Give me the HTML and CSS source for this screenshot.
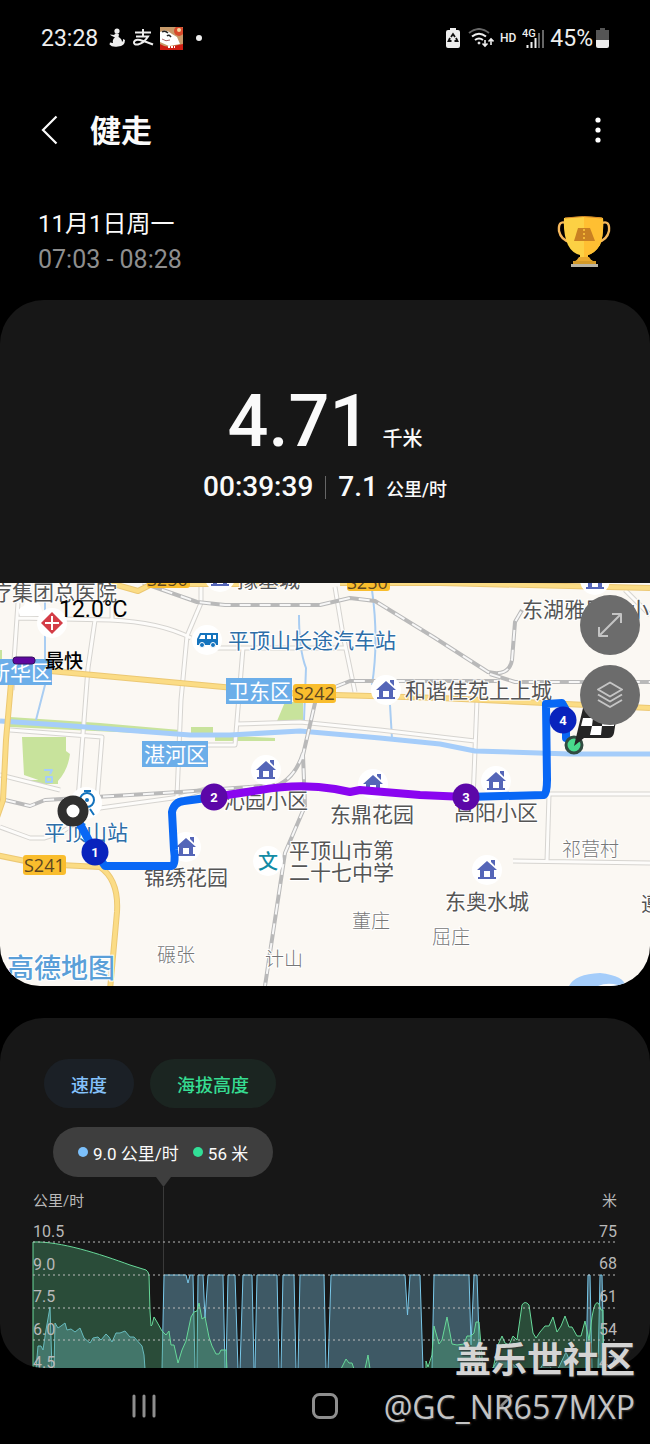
FILE: index.html
```html
<!DOCTYPE html>
<html lang="zh-CN">
<head>
<meta charset="utf-8">
<meta name="viewport" content="width=device-width, initial-scale=1">
<title>健走</title>
<link rel="stylesheet" href="styles.css">
</head>
<body>
<div class="screen">
  <div class="status">
    <div class="status-left">
      <span>23:28</span>
      <svg width="18" height="20" viewBox="0 0 18 20" fill="#eee"><circle cx="9" cy="3" r="2.6"/><path d="M6.500 6Q9 4.500 11 6.500L10.500 9Q14 11 14 14Q15.500 13 15 11L17 12Q17 18 10 18.500Q4 19.500 1.500 16.500L2 14.500L5 15Q4 11.500 7 9.500L3 7.500L2 6.500L6.500 7Z"/></svg>
      <svg width="22" height="20" viewBox="0 0 22 20" fill="none" stroke="#eee" stroke-width="2"><path d="M3 4.500H19M11 1V8.500M4 8.500H16Q12 15 6 16.500Q1.500 17 2 14Q3 11 8 12Q15 14 21 16.500"/></svg>
      <svg width="23" height="23" viewBox="0 0 23 23"><rect width="23" height="23" fill="#c79a6a"/><path d="M0 5Q6 1 12 7L17 10L20 17L9 19L0 15Z" fill="#fff"/><path d="M2 5Q5 3 8 6M7 9Q9 7 11 10" fill="none" stroke="#222" stroke-width="1.500"/><path d="M2 12Q6 15 10 13" fill="none" stroke="#a66"/><circle cx="19" cy="4" r="5" fill="#d84a2b"/><circle cx="19" cy="3" r="2" fill="#f6d7a0"/><path d="M0 17Q6 21 13 19L23 17V23H0Z" fill="#cf1d12"/><path d="M8 20H15" stroke="#fff" stroke-width="2" stroke-dasharray="2 1"/></svg>
      <i class="dot"></i>
    </div>
    <div class="status-right">
      <svg width="14" height="20" viewBox="0 0 14 20"><path d="M4 0H10V2H12Q14 2 14 4V18Q14 20 12 20H2Q0 20 0 18V4Q0 2 2 2H4Z" fill="#eee"/><path d="M5 9L7 6L9 9M10 10L11.500 13H8.500M5.500 13H2.500L4 10" fill="none" stroke="#111" stroke-width="1.800"/></svg>
      <svg class="wifi" width="26" height="20" viewBox="0 0 26 20" fill="none" stroke="#eee" stroke-width="2"><path d="M1 5Q11-3 21 5" stroke="#666"/><path d="M4 8.500Q11 3 18 8.500M7 12Q11 9 15 12"/><circle cx="11" cy="15" r="1" fill="#eee" stroke-width="1"/><path d="M17 12V18M14.500 15.500L17 18L19.500 15.500M23 17V11M20.500 13.500L23 11L25.500 13.500" stroke-width="1.600"/></svg>
      <span class="hd">HD</span>
      <svg width="22" height="20" viewBox="0 0 22 20"><text x="0" y="9" class="g4">4G</text><path d="M5.500 17V20M9.500 14V20M13.500 10V20" stroke="#eee" stroke-width="2"/><path d="M17 5V20M21 2V20" stroke="#666" stroke-width="2"/></svg>
      <span>45%</span>
      <svg class="battery" width="13" height="20" viewBox="0 0 13 20"><path d="M4 0H9V2H13V12H0V2H4Z" fill="#555"/><path d="M0 12H13V18Q13 20 11 20H2Q0 20 0 18Z" fill="#eee"/></svg>
    </div>
  </div>

  <header class="appbar">
    <button class="icon-btn" aria-label="返回"><svg width="17" height="30" viewBox="0 0 17 30" fill="none" stroke="#fafafa" stroke-width="2.200"><path d="M15.500 1.500L2 15L15.500 28.500"/></svg></button>
    <h1>健走</h1>
    <button class="icon-btn" aria-label="更多"><svg width="6" height="26" viewBox="0 0 6 26" fill="#fff"><circle cx="3" cy="3" r="2.600"/><circle cx="3" cy="13" r="2.600"/><circle cx="3" cy="23" r="2.600"/></svg></button>
  </header>

  <section class="when">
    <div>
      <p class="date">11月1日周一</p>
      <p class="time">07:03 - 08:28</p>
    </div>
    <svg width="54" height="54" viewBox="0 0 54 54"><g fill="none" stroke="#f6b85c" stroke-width="2.400"><path d="M9 8Q1 5 2 16Q4 25 13 27"/><path d="M45 8Q53 5 52 16Q50 25 41 27"/></g><path d="M7 3Q27 0 46 3Q47 20 43 30Q38 38 31 40V43Q32 45 36 46V50H18V46Q22 45 23 43V40Q15 38 11 30Q6 19 7 3Z" fill="#fcd144"/><path d="M27 2Q38 1 46 3Q47 20 43 30Q38 38 31 40V43Q32 45 36 46V50H27Z" fill="#ffbf32"/><path d="M8 3Q27 0 45 3" fill="none" stroke="#d98b28"/><path d="M21 13H33L38 26H17Z" fill="#c98022"/><path d="M27 14V25" stroke="#ffc93c" stroke-width="1.500" stroke-dasharray="2 2"/><path d="M22 42H32L35 46H19Z" fill="#e9a92e"/><path d="M16 46H39V50H16Z" fill="#d49a28"/><path d="M14 49H41V52H14Z" fill="#b9b4a4"/></svg>
  </section>

  <main>
    <section class="summary">
      <p class="distance"><span>4.71</span><small>千米</small></p>
      <p class="pace"><span>00:39:39</span><i class="rule"></i><span>7.1</span><small>公里/时</small></p>
    </section>

    <section class="map">
      <svg class="map-canvas" viewBox="0 583 650 403" role="img" aria-label="健走路线地图">
        <defs>
          <g id="house"><circle r="15" fill="#fff"/><path d="M0-9L10 0H7V7H9V9H-9V7H-7V0H-10ZM4-10H8V-4L4-8Z" fill="#5566b8"/><path d="M-3 1H3V7H-3Z" fill="#fff"/></g>
          <path id="lanes" d="M18 603L12 690M18 618L110 620Q160 622 191 638M95 620L88 668L78 800M201 583V603L187 636L181 700L177 796M10 730L102 737L97 800M112 600V620M335 587L343 635L355 692M243 648L235 745H205M215 648H345M237 724L300 722L380 730L475 741M477 700L473 800M549 795L547 861M550 794H650M513 861L650 863M0 827L30 838H44L60 833L100 808L180 797L215 786M0 775L60 790M625 590L650 615"/>
          <path id="rails" d="M143 583L197 602L225 605H320L350 598L375 601L435 638L488 672Q509 677 512 660L515 622L522 610M490 674L515 682H650M335 687L350 681H500M318 690L303 755L305 806L285 853L265 986M303 753Q294 782 270 788M5 800L30 806L45 800L180 792L275 785"/>
          <path id="highways" d="M13 660L6 740L3 800L-4 820M50 671L180 683L300 694L440 698L650 708M110 583L138 591L152 584H300M340 583L440 583L650 588M-4 855L40 864L100 867Q119 880 117 912L110 990"/>
        </defs>
        <rect x="0" y="583" width="650" height="403" fill="#fbf8f3"/>
        <g fill="#c8e39c"><path d="M22 737H66V751L70 754Q68 770 58 781L50 784L24 775Z"/><path d="M285 702H303V721H277Z"/><path d="M191 727H213V734H191Z"/><path d="M0 650H2V680H0ZM10 717L100 723L180 730V735L10 727Z"/><path d="M215 735L275 738V741H215Z"/><path d="M30 780H58V784H30Z"/></g>
        <path class="stream" d="M45 600V685L36 720M299 615Q299 650 306 668L304 720M372 590Q379 640 372 685M390 705L392 739"/>
        <use href="#lanes" class="road-edge"/><use href="#lanes" class="road-core"/>
        <path class="river" d="M0 721L60 725L150 732L190 735L230 735L300 731L380 738L440 744L475 751L570 754H650"/>
        <path d="M569 986Q575 974 600 973Q625 976 625 986Z" fill="#a5cdfa"/><path d="M598 986Q607 982 618 985V986Z" fill="#fff"/>
        <path d="M44 770H52L50 774M46 777H52V782H46Z" fill="none" stroke="#a5cdfa" stroke-width="2"/>
        <use href="#rails" class="rail-edge"/><use href="#rails" class="rail-core"/>
        <use href="#highways" class="main-edge"/><use href="#highways" class="main-core"/>
        <g fill="#6caee9"><rect x="-6" y="659" width="58" height="26"/><rect x="226" y="678" width="66" height="26"/><rect x="142" y="741" width="66" height="26"/></g>
        <g class="district"><text x="-11" y="680">新华区</text><text x="228" y="699">卫东区</text><text x="144" y="762">湛河区</text></g>
        <g fill="#f9bd2d"><rect x="147" y="574" width="43" height="14" rx="3"/><rect x="347" y="574" width="43" height="17" rx="3"/><rect x="293" y="684" width="43" height="19" rx="3"/><rect x="23" y="855" width="43" height="20" rx="3"/></g>
        <g class="route-no"><text x="147" y="586">S250</text><text x="347" y="589">S250</text><text x="294" y="700">S242</text><text x="24" y="872">S241</text></g>

        <use href="#house" x="220" y="577"/><use href="#house" x="595" y="580"/><use href="#house" x="386" y="690"/><use href="#house" x="266" y="770"/><use href="#house" x="373" y="784"/><use href="#house" x="496" y="781"/><use href="#house" x="186" y="847"/><use href="#house" x="487" y="870"/>
        <circle cx="207" cy="640" r="15" fill="#fff"/><path d="M200 633H218V645H197V639Z" fill="#1473bd"/><path d="M201 635H205V639H199ZM207 635H211V639H207ZM213 635H216V639H213Z" fill="#fff"/><circle cx="202" cy="645" r="2.500" fill="#1473bd" stroke="#fff"/><circle cx="213" cy="645" r="2.500" fill="#1473bd" stroke="#fff"/>
        <circle cx="52" cy="623" r="15" fill="#fff"/><path d="M52 612L63 623L52 634L41 623Z" fill="#d43d47"/><path d="M45 623H59M52 616V630" stroke="#fff" stroke-width="2"/>
        <circle cx="268" cy="861" r="15" fill="#fff"/><text x="258" y="869" class="school">文</text>
        <circle cx="86" cy="803" r="16" fill="#fff"/><circle cx="87" cy="800" r="7" fill="none" stroke="#1473bd" stroke-width="2"/><circle cx="87" cy="800" r="2" fill="#1473bd"/><path d="M84 791H91M80 815L84 809M94 815L90 809" stroke="#1473bd" stroke-width="2"/>
        <path d="M20 616Q16 608 24 606Q26 597 34 601Q43 604 42 616Z" fill="#fff"/>

        <g class="place"><text x="-9" y="600">疗集团总医院</text><text x="237" y="587">豫基城</text><text x="405" y="698">和谐佳苑上上城</text><text x="522" y="617">东湖雅居</text><text x="628" y="617">小</text><text x="224" y="808">沁园小区</text><text x="330" y="822">东鼎花园</text><text x="454" y="820">高阳小区</text><text x="144" y="885">锦绣花园</text><text x="289" y="858">平顶山市第</text><text x="289" y="880">二十七中学</text><text x="445" y="909">东奥水城</text><text x="641" y="911">遵</text></g>
        <g class="transit"><text x="228" y="648">平顶山长途汽车站</text><text x="44" y="840">平顶山站</text></g>
        <g class="village"><text x="562" y="856">祁营村</text><text x="432" y="944">屈庄</text><text x="352" y="928">董庄</text><text x="157" y="962">碾张</text><text x="265" y="966">计山</text></g>
        <text x="7" y="978" class="provider">高德地图</text>

        <g class="trail"><path d="M73 811L95 852L105 866H172Q176 864 174 850L172 812Q174 802 184 801L214 797"/><path d="M466 797L544 795Q547 793 547 780L546 704L562 703L566 710V738"/><path d="M214 797L260 790Q300 783 335 789L350 792L360 790L420 795L466 797" stroke="#8a05f0"/></g>
        <circle cx="73" cy="811" r="11" fill="#fff" stroke="#303030" stroke-width="9"/>
        <circle cx="574" cy="745" r="8" fill="#48d98c" stroke="#314b41" stroke-width="3"/>
        <path d="M574 746L583 708H618L614 733Q613 738 608 738H584Z" fill="#252525"/><path d="M583 718H593L592 726H581ZM603 718H615L614 726H602ZM592 726H602L601 735H590ZM594 709H604L603 718H593Z" fill="#fff"/>
        <g fill="#0923bd"><circle cx="95" cy="852" r="13.500"/><circle cx="563" cy="720" r="13.500"/></g><g fill="#5c07a8"><circle cx="214" cy="797" r="13.500"/><circle cx="466" cy="797" r="13.500"/></g>
        <g class="km"><text x="95" y="857">1</text><text x="214" y="802">2</text><text x="466" y="802">3</text><text x="563" y="725">4</text></g>
        <text x="59" y="617" class="temp">12.0°C</text>
        <rect x="13" y="657" width="22" height="7" rx="3" fill="#5f079e" stroke="#35115e"/><text x="45" y="668" class="fastest">最快</text>
      </svg>
      <div class="map-tools">
        <button class="round" aria-label="展开地图"><svg width="26" height="26" viewBox="0 0 26 26" fill="none" stroke="#c4c4c4" stroke-width="2"><path d="M2 24L24 2M15 2H24V11M2 15V24H11"/></svg></button>
        <button class="round" aria-label="图层"><svg width="26" height="28" viewBox="0 0 26 28" fill="none" stroke="#c4c4c4" stroke-width="2"><path d="M13 1.500L25 8.500L13 15.500L1 8.500ZM1 13.500L13 20.500L25 13.500M1 19L13 26L25 19"/></svg></button>
      </div>
    </section>

    <section class="chart-card">
      <div class="chips"><button class="chip speed">速度</button><button class="chip altitude">海拔高度</button></div>
      <div class="bubble"><i class="key blue"></i><span>9.0 公里/时</span><i class="key green"></i><span>56 米</span></div>
      <svg class="chart" viewBox="0 1177 650 191" role="img" aria-label="速度与海拔高度">
        <path d="M156 1177H171L163.500 1187Z" fill="#3e3e3e"/><path d="M163.500 1187V1274" stroke="#3a3a3a"/>
        <path class="spd" d="M36 1369L38 1346H41L43 1350L46 1330L50 1307L52 1369M54 1369L55 1323L58 1328L61 1326L65 1323L67 1330L71 1329L75 1332L80 1328L84 1338L90 1343L93 1338L98 1337L101 1340L106 1334L109 1337L112 1342L116 1333H120L125 1331L130 1337H134L142 1346L144 1355L145 1369M162 1369L164 1275H186L188 1283L190 1275H193L195 1369M197 1369L198 1275H203L205 1318L208 1275H223L225 1369M226 1369L228 1275H235L238 1369M240 1369L243 1275H252L254 1369M255 1369L257 1275H277L279 1369M281 1369L283 1275H294L296 1369M298 1369L300 1275H324L326 1369M328 1369L331 1275H405L407.500 1315L410 1275H420L423 1369M432 1369L434 1275H469L471 1345L474 1275H477L480 1369M492 1369L500 1357L510 1362L518 1369M540 1369L545 1361L552 1369M558 1369L566 1352L573 1369M586 1369L588 1275H590L592 1369M598 1369L600 1275H602L604 1369"/>
        <path class="alt" d="M33 1369V1242C60 1241 100 1254 130 1265L146 1270Q148 1271 149 1275L150 1311L151 1326L152 1325L154 1317L157 1322L162 1331L166 1335L169 1331L171 1345H174L178 1363L182 1350L186 1341L191 1317L194 1312L197 1311L199 1303L202 1319L205 1317L209 1337L212 1346L216 1354H219L221 1350H226L227 1369M341 1369L346 1359L349 1363H352L354 1369M365 1369L368 1355L370 1369M426 1369V1361L428 1367L432 1355L434 1326L439 1344L442 1340L447 1317L452 1344L457 1345L464 1344L467 1336H471L474 1333L476 1322H479L481 1345L483 1369M493 1369L498 1345L502 1336L505 1343L509 1345L513 1336L517 1340L522 1305Q525 1300 529 1305L533 1333L536 1338L540 1332L545 1326H549L553 1317L557 1332L561 1326L565 1316L569 1327H572L577 1336H581L585 1321L589 1340L592 1317Q595 1298 599 1304L601 1310H603V1369"/>
        <path class="grid" d="M33 1242H617M33 1275H617M33 1308H617M33 1340H617"/>
        <g class="axis"><text x="33" y="1206">公里/时</text><text x="33" y="1237">10.5</text><text x="33" y="1270">9.0</text><text x="33" y="1302">7.5</text><text x="33" y="1335">6.0</text><text x="33" y="1368">4.5</text></g>
        <g class="axis right"><text x="617" y="1206">米</text><text x="617" y="1237">75</text><text x="617" y="1269">68</text><text x="617" y="1302">61</text><text x="617" y="1335">54</text><text x="617" y="1368">47</text></g>
      </svg>
    </section>
  </main>

  <nav class="nav">
    <button aria-label="最近任务"><svg width="24" height="26" viewBox="0 0 24 26" stroke="#8e8e8e" stroke-width="3" stroke-linecap="round"><path d="M2 3V23M12 3V23M22 3V23"/></svg></button>
    <button aria-label="主页"><svg width="26" height="26" viewBox="0 0 26 26" fill="none" stroke="#8e8e8e" stroke-width="3"><rect x="1.500" y="1.500" width="23" height="23" rx="6"/></svg></button>
    <button aria-label="返回"><svg width="14" height="24" viewBox="0 0 14 24" fill="none" stroke="#8e8e8e" stroke-width="3"><path d="M13 1L2 12L13 23"/></svg></button>
  </nav>
  <div class="watermark"><strong>盖乐世社区</strong><span>@GC_NR657MXP</span></div>
</div>
</body>
</html>
```
FILE: styles.css
```css
* { box-sizing: border-box; }
body { margin: 0; background: #000; color: #fafafa; font-family: Roboto, "Noto Sans CJK SC", sans-serif; }
p, h1 { margin: 0; }
button { margin: 0; padding: 0; border: 0; background: none; color: inherit; font: inherit; display: flex; align-items: center; justify-content: center; }
svg { display: block; flex: none; }
.screen { position: relative; }

.status { height: 76px; padding: 0 41px; display: flex; align-items: center; justify-content: space-between; font-size: 23px; color: #eee; }
.status-left, .status-right { display: flex; align-items: center; }
.status-left { gap: 6px; }
.status-left > svg:first-of-type { margin-left: 4px; }
.dot { width: 6px; height: 6px; margin-left: 7px; border-radius: 50%; background: #eee; }
.status-right { gap: 6px; }
.wifi { margin-left: 2px; }
.hd { font-size: 12px; font-weight: 500; }
.g4 { font: 500 11px Roboto, sans-serif; fill: #eee; }
.battery { margin-left: -3px; }

.appbar { height: 108px; padding: 0 49px 0 41px; display: flex; align-items: center; }
.appbar h1 { flex: 1; margin-left: 32px; padding-top: 3px; font-size: 31px; line-height: 44px; font-weight: 700; }

.when { padding: 22px 39px 22px 38px; display: flex; align-items: center; justify-content: space-between; }
.date { font-size: 24px; line-height: 36px; }
.time { font-size: 25px; line-height: 36px; color: #8e8e8e; }

.summary { height: 283px; padding-top: 84px; border-radius: 44px 44px 0 0; background: #171717; }
.distance, .pace { display: flex; align-items: baseline; justify-content: center; font-weight: 500; }
.distance { gap: 12px; font-size: 72px; line-height: 76px; }
.distance small { font-size: 20px; line-height: 30px; }
.pace { margin-top: 9px; font-size: 28px; line-height: 36px; }
.pace small { margin-left: 8px; font-size: 18px; line-height: 28px; }
.rule { align-self: center; width: 1px; height: 23px; margin: 0 12px; background: #666; }

.map { position: relative; overflow: hidden; border-radius: 0 0 40px 40px; }
.map-canvas { width: 100%; height: auto; }
.map-tools { position: absolute; top: 12px; right: 10px; display: grid; gap: 10px; }
.round { width: 60px; height: 60px; border-radius: 50%; background: #6c6c6c; }
.map path { stroke-linejoin: round; }
.stream { fill: none; stroke: #a9cdf2; stroke-width: 2; }
.river { fill: none; stroke: #a5cdfa; stroke-width: 5; }
.road-edge { fill: none; stroke: #d6d4d0; stroke-width: 5; }
.road-core { fill: none; stroke: #fdfcfa; stroke-width: 3; }
.rail-edge { fill: none; stroke: #b9b9b9; stroke-width: 4; }
.rail-core { fill: none; stroke: #f7f7f7; stroke-width: 2; stroke-dasharray: 11 9; }
.main-edge { fill: none; stroke: #ecc873; stroke-width: 6; }
.main-core { fill: none; stroke: #fbdc85; stroke-width: 4; }
.map text { font-family: "Noto Sans CJK SC", sans-serif; }
.district { font-size: 21px; fill: #fff; font-weight: 400; }
.map .route-no text { font-family: "Open Sans", sans-serif; font-size: 18px; fill: #5c4520; }
.place, .transit, .village { font-size: 21px; font-weight: 400; fill: #555; stroke: #fff; stroke-width: 2px; paint-order: stroke; }
.transit { fill: #2d6ea8; }
.village { font-size: 19px; font-weight: 300; fill: #777; }
.school { font-size: 20px; font-weight: 500; fill: #128ba5; }
.provider { font-size: 27px; font-weight: 500; fill: #5a9fd8; stroke: #fff; stroke-width: 2px; paint-order: stroke; }
.trail { fill: none; stroke: #0867f5; stroke-width: 8; stroke-linecap: round; }
.map .km text { font: 700 13px Roboto, sans-serif; fill: #fff; text-anchor: middle; }
.map .temp { font: 400 23px Roboto, sans-serif; fill: #000; }
.fastest { font-size: 19px; font-weight: 500; fill: #000; }

.chart-card { margin-top: 32px; padding-top: 41px; border-radius: 44px; background: #171717; overflow: hidden; }
.chips { display: flex; gap: 16px; padding-left: 44px; }
.chip { height: 49px; padding: 0 27px; border-radius: 25px; font-size: 18px; font-weight: 500; }
.speed { background: #1b2026; color: #85c2fc; }
.altitude { background: #1b2521; color: #36dc92; }
.bubble { width: fit-content; height: 50px; margin: 19px 0 0 53px; padding: 0 25px; display: flex; align-items: center; border-radius: 25px; background: #3e3e3e; font-size: 17px; }
.key { width: 10px; height: 10px; margin-right: 5px; border-radius: 50%; }
.blue { background: #7cc0fb; }
.green { margin-left: 14px; background: #32df97; }
.chart { width: 100%; height: auto; }
.alt { fill: rgba(77, 169, 117, .37); stroke: #68d99a; stroke-width: 1; }
.spd { fill: rgba(123, 190, 220, .4); stroke: #79c7e8; stroke-width: 1; }
.grid { stroke: #bbb; stroke-width: 1; stroke-dasharray: 2 3; }
.axis { font-size: 16px; fill: #b9b9b9; }
.axis text:first-child { font-size: 15px; }
.right { text-anchor: end; }

.nav { height: 76px; padding: 0 53px; display: grid; grid-template-columns: repeat(3, 1fr); }
.watermark { position: absolute; right: 15px; bottom: 14px; display: flex; flex-direction: column; align-items: flex-end; color: #d4d4d4; text-shadow: 1px 1px 2px #333; }
.watermark strong { font-size: 36px; line-height: 46px; font-weight: 700; }
.watermark span { font-family: "Open Sans", sans-serif; font-size: 32px; line-height: 46px; color: #c4c4c4; }
```
